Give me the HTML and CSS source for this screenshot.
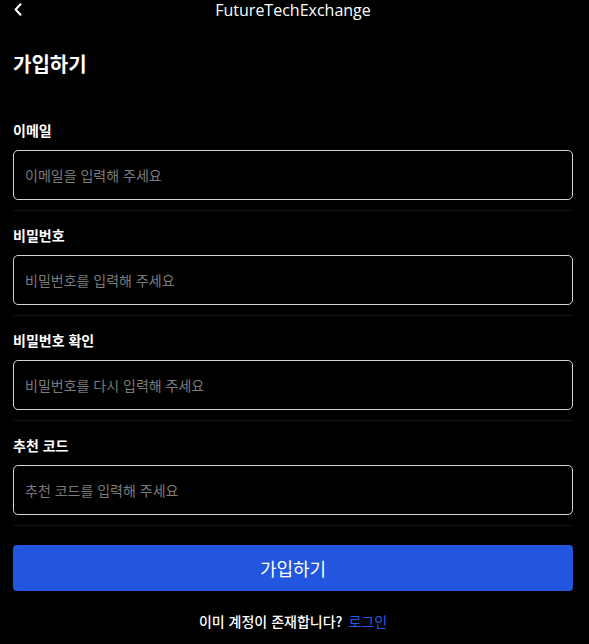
FILE: index.html
```html
<!DOCTYPE html>
<html lang="ko">
<head>
<meta charset="utf-8">
<title>FutureTechExchange</title>
<link rel="stylesheet" href="styles.css">
</head>
<body>
<div class="page">
  <header class="topbar">
    <button class="back" aria-label="뒤로">
      <svg width="8" height="13" viewBox="0 0 8 13"><path d="M6.5 1.2 L1.6 6.5 L6.5 11.8" fill="none" stroke="#fff" stroke-width="2" stroke-linecap="round" stroke-linejoin="round"/></svg>
    </button>
    <div class="title">FutureTechExchange</div>
  </header>
  <h1 class="heading">가입하기</h1>
  <form class="form">
    <div class="group">
      <label class="label">이메일</label>
      <input class="input" type="text" placeholder="이메일을 입력해 주세요">
      <div class="divider"></div>
    </div>
    <div class="group">
      <label class="label">비밀번호</label>
      <input class="input" type="password" placeholder="비밀번호를 입력해 주세요">
      <div class="divider"></div>
    </div>
    <div class="group">
      <label class="label">비밀번호 확인</label>
      <input class="input" type="password" placeholder="비밀번호를 다시 입력해 주세요">
      <div class="divider"></div>
    </div>
    <div class="group">
      <label class="label">추천 코드</label>
      <input class="input" type="text" placeholder="추천 코드를 입력해 주세요">
      <div class="divider"></div>
    </div>
    <button type="button" class="submit">가입하기</button>
  </form>
  <p class="footer">이미 계정이 존재합니다?<a class="link" href="#">로그인</a></p>
</div>
</body>
</html>
```
FILE: styles.css
```css
html, body {
  margin: 0;
  background: #000;
  color: #fff;
  font-family: "Noto Sans CJK KR", "Noto Sans", sans-serif;
}
.page {
  padding: 0 16px 0 13px;
}
.topbar {
  position: relative;
  height: 20px;
  display: flex;
  justify-content: center;
  align-items: center;
}
.back {
  position: absolute;
  left: 0;
  top: 0;
  width: 20px;
  height: 18px;
  padding: 0 0 0 1px;
  background: none;
  border: 0;
  display: flex;
  align-items: center;
  cursor: pointer;
}
.title {
  font-family: "Open Sans", sans-serif;
  font-size: 16px;
  line-height: 20px;
  color: #fff;
}
.heading {
  margin: 30px 0 0;
  font-size: 20px;
  line-height: 28px;
  font-weight: 700;
}
.form {
  margin-top: 42px;
  display: flex;
  flex-direction: column;
}
.group {
  display: flex;
  flex-direction: column;
  margin-bottom: 14px;
}
.group:last-of-type {
  margin-bottom: 0;
}
.label {
  font-size: 14px;
  line-height: 20px;
  font-weight: 700;
  margin-bottom: 10px;
}
.input {
  box-sizing: border-box;
  height: 50px;
  width: 100%;
  background: #000;
  border: 1px solid #d4d4d4;
  border-radius: 5px;
  padding: 0 11px;
  color: #fff;
  font-family: inherit;
  font-size: 14px;
  outline: none;
}
.input::placeholder {
  color: #7b7b7b;
}
.divider {
  height: 1px;
  background: #121212;
  margin-top: 10px;
}
.submit {
  margin-top: 19px;
  height: 46px;
  border: 0;
  border-radius: 4px;
  background: #2356de;
  color: #fff;
  font-family: inherit;
  font-size: 18px;
  cursor: pointer;
}
.footer {
  margin: 20px 0 0;
  text-align: center;
  font-size: 14px;
  line-height: 20px;
  font-weight: 500;
}
.link {
  color: #2b5be6;
  text-decoration: none;
  font-weight: 400;
  margin-left: 6px;
}
```
